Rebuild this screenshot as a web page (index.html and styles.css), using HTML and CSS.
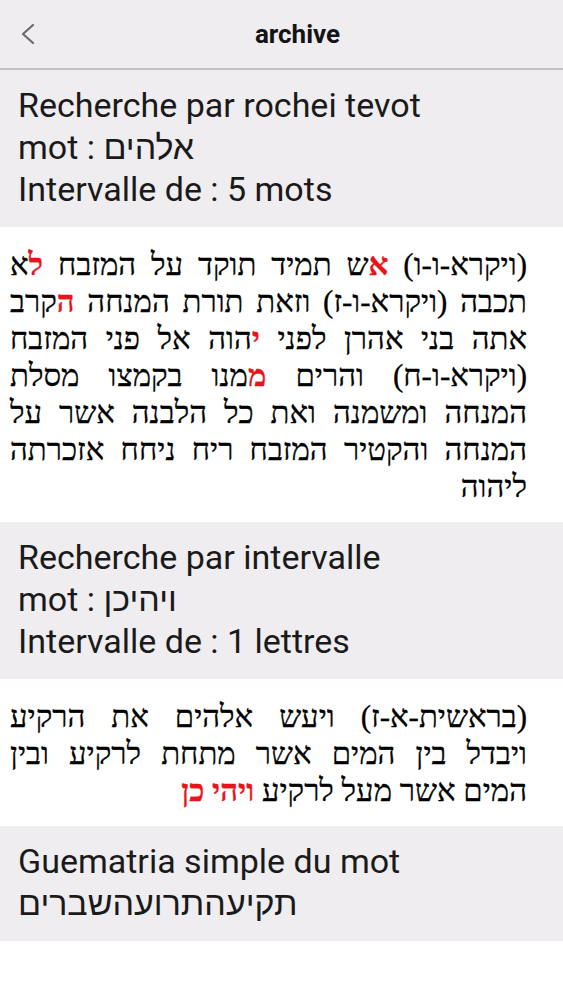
FILE: index.html
```html
<!DOCTYPE html>
<html lang="fr">
<head>
<meta charset="utf-8">
<title>archive</title>
<link rel="stylesheet" href="styles.css">
</head>
<body>
<header class="topbar">
  <button class="back" aria-label="retour">
    <svg width="16" height="22" viewBox="0 0 16 22"><path d="M13 2 L3 11 L13 20" fill="none" stroke="#6b6b6b" stroke-width="2.2" stroke-linecap="round" stroke-linejoin="round"/></svg>
  </button>
  <h1 class="title">archive</h1>
</header>

<section class="query">
  <div>Recherche par rochei tevot</div>
  <div>mot : <span class="he">אלהים</span></div>
  <div>Intervalle de : 5 mots</div>
</section>

<section class="verse" dir="rtl" lang="he">
  <div class="ln">(ויקרא-ו-ו) <b class="r">א</b>ש תמיד תוקד על המזבח <b class="r">ל</b>א</div>
  <div class="ln">תכבה (ויקרא-ו-ז) וזאת תורת המנחה <b class="r">ה</b>קרב</div>
  <div class="ln">אתה בני אהרן לפני <b class="r">י</b>הוה אל פני המזבח</div>
  <div class="ln">(ויקרא-ו-ח) והרים <b class="r">מ</b>מנו בקמצו מסלת</div>
  <div class="ln">המנחה ומשמנה ואת כל הלבנה אשר על</div>
  <div class="ln">המנחה והקטיר המזבח ריח ניחח אזכרתה</div>
  <div class="ln last">ליהוה</div>
</section>

<section class="query">
  <div>Recherche par intervalle</div>
  <div>mot : <span class="he">ויהיכן</span></div>
  <div>Intervalle de : 1 lettres</div>
</section>

<section class="verse" dir="rtl" lang="he">
  <div class="ln">(בראשית-א-ז) ויעש אלהים את הרקיע</div>
  <div class="ln">ויבדל בין המים אשר מתחת לרקיע ובין</div>
  <div class="ln last">המים אשר מעל לרקיע <b class="r">ויהי כן</b></div>
</section>

<section class="query">
  <div>Guematria simple du mot</div>
  <div><span class="he">תקיעהתרועהשברים</span></div>
</section>
</body>
</html>
```
FILE: styles.css
```css
html, body {
  margin: 0;
  padding: 0;
  background: #ffffff;
}
body {
  width: 563px;
  font-family: Roboto, "Liberation Sans", "DejaVu Sans", sans-serif;
  color: #1c1c1c;
}
.topbar {
  display: flex;
  align-items: center;
  height: 68px;
  background: #efedf0;
  border-bottom: 2px solid #c2c2c4;
}
.back {
  width: 56px;
  height: 68px;
  padding: 0;
  border: 0;
  background: transparent;
  display: flex;
  align-items: center;
  justify-content: center;
}
.title {
  flex: 1;
  margin: 0;
  padding-right: 24px;
  text-align: center;
  font-size: 26px;
  font-weight: 700;
  color: #141414;
}
.query {
  background: #efedf0;
  padding: 14px 18px 17px;
  font-size: 34px;
  line-height: 42px;
  color: #1a1a1a;
}
.he {
  font-family: "Liberation Sans", "DejaVu Sans", sans-serif;
  font-weight: 400;
}
.verse {
  background: #ffffff;
  padding: 19px 36px 17px 10px;
  font-family: "Liberation Serif", "DejaVu Serif", serif;
  font-size: 31px;
  line-height: 37px;
  color: #000000;
  -webkit-text-stroke: 0.3px #000000;
}
.ln {
  text-align: justify;
  text-align-last: justify;
  white-space: nowrap;
}
.ln.last {
  text-align-last: right;
}
.r {
  color: #e8141c;
  font-weight: 700;
  -webkit-text-stroke: 0.3px #e8141c;
}
```
